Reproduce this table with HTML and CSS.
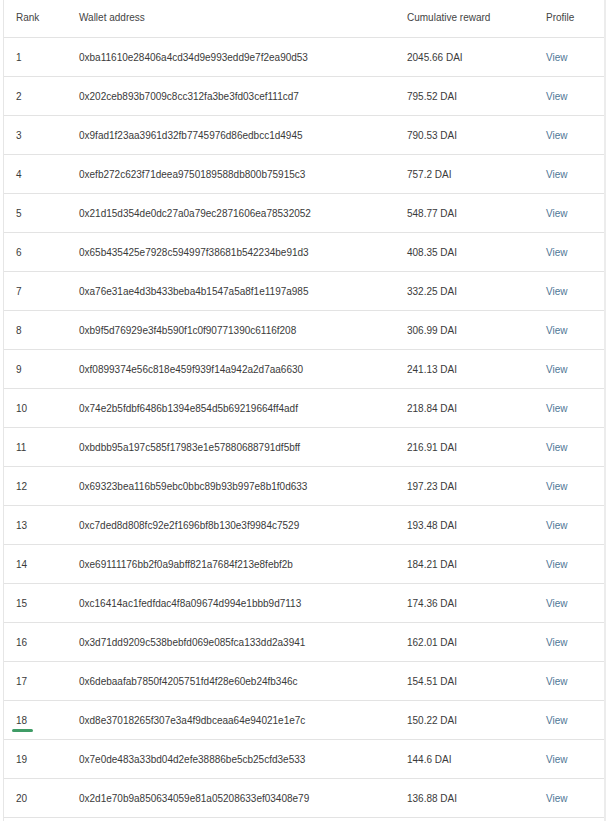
FILE: index.html
```html
<!DOCTYPE html>
<html lang="en">
<head>
    <meta charset="UTF-8">
    <meta name="viewport" content="width=device-width, initial-scale=1.0">
    <title>Leaderboard</title>
    <link rel="stylesheet" href="styles.css">
</head>
<body>
    <div class="board">
        <div class="row head">
            <div>Rank</div>
            <div>Wallet address</div>
            <div>Cumulative reward</div>
            <div>Profile</div>
        </div>
        <div id="rows"></div>
    </div>

    <script>
        const data = [
            ['0xba11610e28406a4cd34d9e993edd9e7f2ea90d53', '2045.66'],
            ['0x202ceb893b7009c8cc312fa3be3fd03cef111cd7', '795.52'],
            ['0x9fad1f23aa3961d32fb7745976d86edbcc1d4945', '790.53'],
            ['0xefb272c623f71deea9750189588db800b75915c3', '757.2'],
            ['0x21d15d354de0dc27a0a79ec2871606ea78532052', '548.77'],
            ['0x65b435425e7928c594997f38681b542234be91d3', '408.35'],
            ['0xa76e31ae4d3b433beba4b1547a5a8f1e1197a985', '332.25'],
            ['0xb9f5d76929e3f4b590f1c0f90771390c6116f208', '306.99'],
            ['0xf0899374e56c818e459f939f14a942a2d7aa6630', '241.13'],
            ['0x74e2b5fdbf6486b1394e854d5b69219664ff4adf', '218.84'],
            ['0xbdbb95a197c585f17983e1e57880688791df5bff', '216.91'],
            ['0x69323bea116b59ebc0bbc89b93b997e8b1f0d633', '197.23'],
            ['0xc7ded8d808fc92e2f1696bf8b130e3f9984c7529', '193.48'],
            ['0xe69111176bb2f0a9abff821a7684f213e8febf2b', '184.21'],
            ['0xc16414ac1fedfdac4f8a09674d994e1bbb9d7113', '174.36'],
            ['0x3d71dd9209c538bebfd069e085fca133dd2a3941', '162.01'],
            ['0x6debaafab7850f4205751fd4f28e60eb24fb346c', '154.51'],
            ['0xd8e37018265f307e3a4f9dbceaa64e94021e1e7c', '150.22'],
            ['0x7e0de483a33bd04d2efe38886be5cb25cfd3e533', '144.6'],
            ['0x2d1e70b9a850634059e81a05208633ef03408e79', '136.88']
        ];

        const rows = document.getElementById('rows');
        data.forEach((item, i) => {
            const rank = i + 1;
            // 当前用户那一行，数字下面有条绿线
            const mark = rank === 18 ? '<span class="mark"></span>' : '';
            rows.innerHTML += `
                <div class="row">
                    <div class="rank">${rank}${mark}</div>
                    <div>${item[0]}</div>
                    <div>${item[1]} DAI</div>
                    <div><a href="#">View</a></div>
                </div>`;
        });
    </script>
</body>
</html>
```

FILE: styles.css
```css
* {
    margin: 0;
    padding: 0;
    box-sizing: border-box;
}

body {
    font-family: 'Liberation Sans', Arial, sans-serif;
    font-size: 10px;
    color: #3a3a3a;
    background-color: #fff;
    overflow: hidden;
}

.board {
    margin-left: 3px;
    width: 603px;
    border-left: 1px solid #e6e6e6;
    border-right: 2px solid #ececec;
    min-height: 100vh;
}

.row {
    display: grid;
    grid-template-columns: 63px 328px 139px 1fr;
    align-items: center;
    height: 39px;
    padding-left: 12px;
    border-bottom: 1px solid #e3e3e3;
}

.row.head {
    height: 38px;
    padding-bottom: 3px;
    color: #444;
}

.rank {
    position: relative;
}

.mark {
    position: absolute;
    left: -4px;
    top: 14px;
    width: 21px;
    height: 3px;
    border-radius: 2px;
    background-color: #3f9c66;
}

a {
    color: #4f7696;
    text-decoration: none;
}

a:hover {
    text-decoration: underline;
}
```
